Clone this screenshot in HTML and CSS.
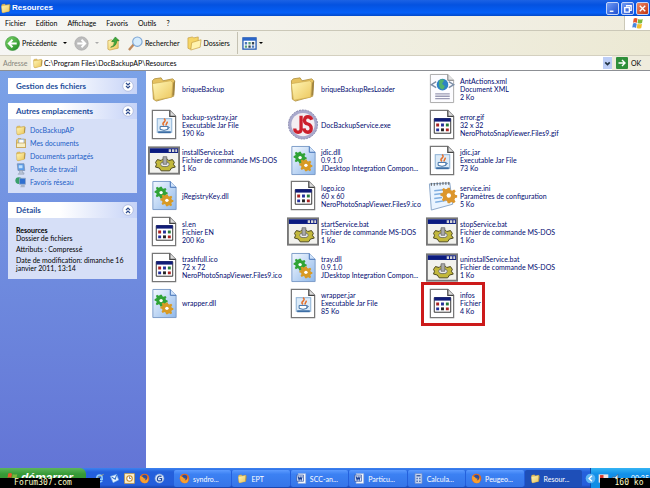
FILE: index.html
```html
<!DOCTYPE html>
<html lang="fr">

<head>
    <meta charset="UTF-8" />
    <meta name="viewport" content="width=device-width, initial-scale=1.0" />
    <title>Resources</title>
    <link rel="stylesheet" href="styles.css">
</head>

<body>
    <!-- icones communes -->
    <svg class="sprite" aria-hidden="true">
        <defs>
            <linearGradient id="gFolder" x1="0" y1="0" x2="1" y2="1">
                <stop offset="0" stop-color="#fff7b8" />
                <stop offset="1" stop-color="#ecc65c" />
            </linearGradient>
            <linearGradient id="gDll" x1="0" y1="0" x2="1" y2="1">
                <stop offset="0" stop-color="#f4f9ff" />
                <stop offset="1" stop-color="#8fb8ea" />
            </linearGradient>
            <linearGradient id="gGreen" x1="0" y1="0" x2="1" y2="1">
                <stop offset="0" stop-color="#7fd66b" />
                <stop offset="1" stop-color="#1f8a22" />
            </linearGradient>
        </defs>
        <symbol id="folder" viewBox="0 0 32 32">
            <path d="M4 8l2-2 7-1 2 3 10-2 2 2-1 16-18 5-3-2z" fill="#e6c260" stroke="#a98a3a" stroke-width=".8" />
            <path d="M4 11l19-3 2 2-1 15-17 3-1-1z" fill="url(#gFolder)" stroke="#c8a44a" stroke-width=".6" />
            <path d="M25.500 10l2-2-1 14-2 2z" fill="#a08440" />
        </symbol>
        <symbol id="page" viewBox="0 0 32 32">
            <path d="M4 1.500h18l6 6v23H4z" fill="#fff" stroke="#777" stroke-width="1.300" />
            <path d="M22 1.500v6h6" fill="#ddd" stroke="#444" stroke-width="1.300" />
        </symbol>
        <symbol id="gear" viewBox="0 0 16 16">
            <path d="M7 1h2l.5 2 1.500.6 2-1 1.400 1.500-1.200 1.700.6 1.400 2 .6v2l-2 .5-.6 1.500 1 1.800-1.600 1.400-1.700-1.100-1.500.6L9 15H7l-.6-2-1.400-.6-1.900 1-1.400-1.500 1.100-1.800-.6-1.500-2-.5V6.200l2-.6.6-1.400-1-1.700L3.300 1.200l1.800 1 1.400-.5z" />
            <circle cx="8" cy="8" r="2" fill="#fff" />
        </symbol>
        <symbol id="jar" viewBox="0 0 32 32">
            <use href="#page" />
            <rect x="9" y="10" width="15" height="14" fill="#dcebf8" stroke="#8ab0d4" />
            <path d="M16 17c-4-3 4-4 0-7M18.500 17c-1.500-2 2-2 .5-4" fill="none" stroke="#e4702c" stroke-width="1.600" />
            <path d="M12 18h8v3q-4 2-8 0zM20 18.500q3 0 0 2" fill="#fff" stroke="#3d6ea5" />
            <path d="M10 24h13" stroke="#3d6ea5" stroke-width="2" />
        </symbol>
        <symbol id="dll" viewBox="0 0 32 32">
            <path d="M4.500 1.500h18l6 6v23h-24z" fill="url(#gDll)" stroke="#7c9cc8" />
            <path d="M22.500 1.500v6h6" fill="#cfe2fa" stroke="#3c6cb4" />
            <use href="#gear" x="6" y="6" width="14" height="14" fill="#2fa336" />
            <use href="#gear" x="12" y="14" width="14" height="14" fill="#d89a24" />
        </symbol>
        <symbol id="bat" viewBox="0 0 34 30">
            <rect x="1" y="1" width="32" height="28" fill="#f2f2ee" stroke="#777" stroke-width="2" />
            <path d="M2 2h30v5H2z" fill="#0b1b80" />
            <path d="M22 3h2.500v3H22zM25.500 3H28v3h-2.500zM29 3h2v3h-2z" fill="#d5d5d5" />
            <path d="M8 17l2-3 4 1 2-2h4l2 2 4-1 2 3-1 2 2 3-4 1-2 3h-9l-2-3-4-1 1-3z" fill="#c2b83c" stroke="#45411a" />
            <ellipse cx="18" cy="19" rx="4.500" ry="2.500" fill="#efefef" stroke="#555" stroke-width=".8" />
            <path d="M16 11h4v8h-4z" fill="#aaa" stroke="#666" stroke-width=".8" />
        </symbol>
        <symbol id="table" viewBox="0 0 32 32">
            <use href="#page" />
            <path d="M8 10h17v15H8z" fill="#fff" stroke="#333" />
            <path d="M8 9.500h17v3.500H8z" fill="#101c78" />
            <path d="M10 15h3v3h-3zM20 20h3v3h-3z" fill="#a22" />
            <path d="M15 15h3v3h-3zM10 20h3v3h-3z" fill="#24309a" />
            <path d="M20 15h3v3h-3z" fill="#267a3a" />
            <path d="M15 20h3v3h-3z" fill="#222" />
        </symbol>
        <symbol id="xml" viewBox="0 0 32 32">
            <path d="M4 1.500h18l6 6v23H4z" fill="#fcfcff" stroke="#aaa" />
            <path d="M22 1.500v6h6" fill="#e4e4e4" stroke="#777" />
            <path d="M10 9l-5 3 5 3M23 9l5 3-5 3" fill="none" stroke="#7d8fa8" stroke-width="1.500" />
            <circle cx="16.500" cy="12" r="6" fill="#2d83c4" />
            <path d="M13 8q4-3 5 0l-2 3 3 3-2 3q-4-1-4-5z" fill="#52b36c" />
            <path d="M9 21.500h15M9 24h15M9 26.500h15" stroke="#9a9ab4" stroke-width="1.300" />
        </symbol>
        <symbol id="ini" viewBox="0 0 32 32">
            <path d="M3 4l21-1 3 22-22 6z" fill="#eaf4ff" stroke="#8aa6c8" />
            <path d="M5 3v3M8 3v3M11 2.500v3M14 2.500v3M17 2v3M20 2v3M23 2v3" stroke="#555" />
            <path d="M8 11l10-1M8 15l8-1M8 19l8-1M9 23l12-2" stroke="#7faee0" stroke-width="1.500" />
            <use href="#gear" x="14" y="7" width="18" height="18" fill="#dc962c" />
        </symbol>
        <symbol id="exe" viewBox="0 0 32 32">
            <circle cx="16" cy="16" r="15" fill="#a9a9cc" stroke="#8585ac" stroke-dasharray="2 1" />
            <circle cx="16" cy="16" r="12" fill="#f4eef2" />
            <path d="M14 7v14q0 3-3 3-3.500 0-3.500-4M25 11q-1-3-4-3t-3.500 3.500q0 3 3.500 4t3.500 4.500-3.500 4q-3.500 0-4-4" fill="none" stroke="#cc1f2c" stroke-width="3.400" />
        </symbol>
        <symbol id="chevron" viewBox="0 0 12 12">
            <circle cx="6" cy="6" r="5.300" fill="#fff" stroke="#a9b6dc" stroke-width=".8" />
            <path d="M4 3l2 2 2-2M4 6l2 2 2-2" fill="none" stroke="#2c4a8c" stroke-width="1.200" />
        </symbol>
        <symbol id="pc" viewBox="0 0 16 16">
            <path d="M3 1h9l1 9H4z" fill="#5b9be8" stroke="#7c8fb0" />
            <path d="M5 3h5v4H5z" fill="#bfe0ff" />
            <path d="M6 10h4v3h2v2H4l2-2z" fill="#b9c3d6" stroke="#8290a8" stroke-width=".6" />
        </symbol>
        <symbol id="docs" viewBox="0 0 16 16">
            <path d="M2 4l2-2h4l1 1h5v11H2z" fill="#f0d070" stroke="#b8923a" stroke-width=".8" />
            <path d="M5 3h7v6H5z" fill="#fff" stroke="#7aa4dc" />
            <path d="M2 8h12v6H2z" fill="#f7eec4" stroke="#b8923a" stroke-width=".8" />
        </symbol>
        <symbol id="network" viewBox="0 0 16 16">
            <circle cx="5" cy="6" r="4.500" fill="#3aa06c" />
            <path d="M6 3h8v8H6z" fill="#2f6fd0" stroke="#93a5c4" />
            <path d="M8 12h5v3H7z" fill="#a8b4c8" />
        </symbol>
        <symbol id="firefox" viewBox="0 0 16 16">
            <circle cx="8" cy="8" r="7" fill="#e5691c" />
            <circle cx="8" cy="6.500" r="4" fill="#2c4f9c" />
            <path d="M1.500 4q2 2 4 1.500l1.500 2 3 1-2 2.500q4 0 5-5 2 9-5 9-7-1-6.500-11z" fill="#f5a031" />
        </symbol>
        <symbol id="word" viewBox="0 0 16 16">
            <path d="M3 1h11v14H3z" fill="#fff" stroke="#9fb4dc" />
            <path d="M1 3h10v9H1z" fill="#dde8fb" stroke="#2a4fa0" />
            <path d="M3 5l1.500 5L6 6l1.500 4L9 5" fill="none" stroke="#173b90" stroke-width="1.500" />
        </symbol>
        <symbol id="flag" viewBox="0 0 16 16">
            <path d="M3 2q3-1.500 5 .3L7 8Q5 6.500 2 7.500z" fill="#e8562a" />
            <path d="M9 2.500q3 1.500 6 0L14 8q-3 1.500-6 0z" fill="#7cb83a" />
            <path d="M2 8.500q3-1 5 .5l-1 5.500q-2-1.700-5-.5z" fill="#4a86dc" />
            <path d="M8 9q3 1.500 6 0l-1 5.500q-3 1.500-6 0z" fill="#f2bd2c" />
        </symbol>
    </svg>

    <!-- barre de titre -->
    <header class="titlebar">
        <svg class="icon12"><use href="#folder" /></svg>
        <h1>Resources</h1>
        <div class="winbtns">
            <button class="winbtn" aria-label="Réduire"><svg viewBox="0 0 12 12"><path d="M3 9h4" /></svg></button>
            <button class="winbtn" aria-label="Restaurer"><svg viewBox="0 0 12 12"><path d="M5 4V3h5v5H8M3 5h5v5H3z" /></svg></button>
            <button class="winbtn close" aria-label="Fermer"><svg viewBox="0 0 12 12"><path d="M3 3l6 6M9 3l-6 6" /></svg></button>
        </div>
    </header>

    <nav class="menubar">
        <button>Fichier</button>
        <button>Edition</button>
        <button>Affichage</button>
        <button>Favoris</button>
        <button>Outils</button>
        <button>?</button>
        <div class="logo"><svg><use href="#flag" /></svg></div>
    </nav>

    <div class="toolbar">
        <button class="tool">
            <svg viewBox="0 0 16 16"><circle cx="8" cy="8" r="7.500" fill="url(#gGreen)" stroke="#2c8a30" stroke-width=".6" /><path d="M12.500 8H4M8 4L4 8l4 4" fill="none" stroke="#fff" stroke-width="2" /></svg>
            <span>Précédente</span><i class="caret"></i>
        </button>
        <button class="tool" aria-label="Suivante">
            <svg viewBox="0 0 16 16"><circle cx="8" cy="8" r="7.200" fill="#bcbcbc" stroke="#a4a4a4" stroke-width=".6" /><path d="M3.500 8H12M8 4l4 4-4 4" fill="none" stroke="#fff" stroke-width="2" /></svg>
            <i class="caret off"></i>
        </button>
        <button class="tool" aria-label="Dossier parent">
            <svg viewBox="0 0 16 16"><path d="M2 5l4-1 1 1 6-1v9l-9 2-2-1z" fill="url(#gFolder)" stroke="#c49b3c" stroke-width=".7" /><path d="M5 12q4-1 4-6H6l4-5 4 4h-2.500q0 6-6.500 7z" fill="#3da83c" stroke="#1f7a22" stroke-width=".6" /></svg>
        </button>
        <button class="tool">
            <svg viewBox="0 0 16 16"><path d="M1 15l5-6" stroke="#c08a5c" stroke-width="2.500" /><circle cx="10" cy="6" r="5" fill="#d6ecfc" stroke="#7ea6d4" stroke-width="1.200" /></svg>
            <span>Rechercher</span>
        </button>
        <button class="tool">
            <svg viewBox="0 0 16 16"><path d="M1 2l5-1 1 1 5-1v9l-9 4-2-1z" fill="#f5d566" stroke="#c49b3c" stroke-width=".7" /><path d="M5 7l10-3-1 8-10 3z" fill="#fff3ae" stroke="#c49b3c" stroke-width=".7" /></svg>
            <span>Dossiers</span>
        </button>
        <button class="tool views" aria-label="Affichages">
            <svg viewBox="0 0 16 14"><rect x="1" y="1" width="14" height="12" fill="#fff" stroke="#245cb4" stroke-width="1.400" /><path d="M1 1h14v3H1z" fill="#2a66c8" /><path d="M3 5.500h2.500V8H3zM10.500 9H13v2.500h-2.500z" fill="#4a78b8" /><path d="M6.800 5.500h2.500V8H6.800zM3 9h2.500v2.500H3z" fill="#58a078" /><path d="M10.500 5.500H13V8h-2.500zM6.800 9h2.500v2.500H6.800z" fill="#345" /></svg>
            <i class="caret"></i>
        </button>
    </div>

    <form class="address">
        <label for="path">Adresse</label>
        <div class="field">
            <svg class="icon12"><use href="#folder" /></svg>
            <input type="text" id="path" value="C:\Program Files\DocBackupAP\Resources">
            <button type="button" class="drop" aria-label="Dérouler"><svg viewBox="0 0 8 8"><path d="M2 3l2 2 2-2" /></svg></button>
        </div>
        <button type="button" class="go">
            <svg viewBox="0 0 12 12"><rect width="12" height="12" rx="1" fill="#2f8f3a" /><path d="M2.500 6H9M6 3l3 3-3 3" fill="none" stroke="#fff" stroke-width="1.400" /></svg>
            OK
        </button>
    </form>

    <main class="main">
        <aside class="sidebar">
            <section class="panel">
                <h2>Gestion des fichiers <button aria-label="Développer"><svg><use href="#chevron" /></svg></button></h2>
            </section>
            <section class="panel">
                <h2>Autres emplacements <button class="up" aria-label="Réduire"><svg><use href="#chevron" /></svg></button></h2>
                <ul class="places">
                    <li><a href="#"><svg class="icon12"><use href="#folder" /></svg>DocBackupAP</a></li>
                    <li><a href="#"><svg class="icon12"><use href="#docs" /></svg>Mes documents</a></li>
                    <li><a href="#"><svg class="icon12"><use href="#folder" /></svg>Documents partagés</a></li>
                    <li><a href="#"><svg class="icon12"><use href="#pc" /></svg>Poste de travail</a></li>
                    <li><a href="#"><svg class="icon12"><use href="#network" /></svg>Favoris réseau</a></li>
                </ul>
            </section>
            <section class="panel">
                <h2>Détails <button class="up" aria-label="Réduire"><svg><use href="#chevron" /></svg></button></h2>
                <div class="details">
                    <p><b>Resources</b><br>Dossier de fichiers</p>
                    <p>Attributs : Compressé</p>
                    <p>Date de modification: dimanche 16 janvier 2011, 13:14</p>
                </div>
            </section>
        </aside>

        <!-- liste des fichiers -->
        <ul class="files">
            <li><svg><use href="#folder" /></svg><p>briqueBackup</p></li>
            <li><svg><use href="#folder" /></svg><p>briqueBackupResLoader</p></li>
            <li><svg><use href="#xml" /></svg><p>AntActions.xml<br>Document XML<br>2 Ko</p></li>

            <li><svg><use href="#jar" /></svg><p>backup-systray.jar<br>Executable Jar File<br>190 Ko</p></li>
            <li><svg><use href="#exe" /></svg><p>DocBackupService.exe</p></li>
            <li><svg><use href="#table" /></svg><p>error.gif<br>32 x 32<br>NeroPhotoSnapViewer.Files9.gif</p></li>

            <li><svg><use href="#bat" /></svg><p>installService.bat<br>Fichier de commande MS-DOS<br>1 Ko</p></li>
            <li><svg><use href="#dll" /></svg><p>jdic.dll<br>0.9.1.0<br>JDesktop Integration Compon...</p></li>
            <li><svg><use href="#jar" /></svg><p>jdic.jar<br>Executable Jar File<br>73 Ko</p></li>

            <li><svg><use href="#dll" /></svg><p>jRegistryKey.dll</p></li>
            <li><svg><use href="#table" /></svg><p>logo.ico<br>60 x 60<br>NeroPhotoSnapViewer.Files9.ico</p></li>
            <li><svg><use href="#ini" /></svg><p>service.ini<br>Paramètres de configuration<br>5 Ko</p></li>

            <li><svg><use href="#table" /></svg><p>sl.en<br>Fichier EN<br>200 Ko</p></li>
            <li><svg><use href="#bat" /></svg><p>startService.bat<br>Fichier de commande MS-DOS<br>1 Ko</p></li>
            <li><svg><use href="#bat" /></svg><p>stopService.bat<br>Fichier de commande MS-DOS<br>1 Ko</p></li>

            <li><svg><use href="#table" /></svg><p>trashfull.ico<br>72 x 72<br>NeroPhotoSnapViewer.Files9.ico</p></li>
            <li><svg><use href="#dll" /></svg><p>tray.dll<br>0.9.1.0<br>JDesktop Integration Compon...</p></li>
            <li><svg><use href="#bat" /></svg><p>uninstallService.bat<br>Fichier de commande MS-DOS<br>1 Ko</p></li>

            <li><svg><use href="#dll" /></svg><p>wrapper.dll</p></li>
            <li><svg><use href="#jar" /></svg><p>wrapper.jar<br>Executable Jar File<br>85 Ko</p></li>
            <li class="marked"><svg><use href="#table" /></svg><p>infos<br>Fichier<br>4 Ko</p></li>
        </ul>
    </main>

    <footer class="taskbar">
        <button class="start"><svg><use href="#flag" /></svg>démarrer</button>
        <div class="quick">
            <svg viewBox="0 0 16 16"><path d="M13 9H4q1 4 4 4t4-2M4 8q0-5 4-5t4 5" fill="none" stroke="#8ccbff" stroke-width="2.200" /><path d="M1 13Q0 8 14 2" fill="none" stroke="#d8c060" /></svg>
            <svg viewBox="0 0 16 16"><path d="M2 5l9-3 3 8-8 4z" fill="#e8f3ff" stroke="#7ab2e8" /><path d="M4 6l5 3 2-6" fill="none" stroke="#2a6cc8" stroke-width="1.500" /></svg>
            <svg viewBox="0 0 16 16"><rect x="1" y="1" width="14" height="14" fill="#fbeecb" stroke="#d9a336" /><circle cx="8" cy="8" r="4" fill="#fff" stroke="#c98a20" stroke-width="1.500" /><path d="M8 5v3h2" fill="none" stroke="#555" /></svg>
            <svg><use href="#firefox" /></svg>
            <svg viewBox="0 0 16 16"><circle cx="8" cy="8" r="6.500" fill="#dce8fa" stroke="#7ea0d8" /><path d="M11 5q-5-2-6 3t6 3V8H8" fill="none" stroke="#234a9c" stroke-width="1.800" /></svg>
        </div>
        <div class="tasks">
            <button><svg><use href="#firefox" /></svg>syndro...</button>
            <button><svg><use href="#folder" /></svg>EPT</button>
            <button><svg><use href="#word" /></svg>SCC-an...</button>
            <button><svg><use href="#word" /></svg>Particu...</button>
            <button><svg viewBox="0 0 16 16"><path d="M3 1h10v14H3z" fill="#cfdcf4" stroke="#7a92c4" /><path d="M5 3h6v2H5zM5 7h2v2H5zM9 7h2v2H9zM5 11h2v2H5zM9 11h2v2H9z" fill="#3f62a8" /></svg>Calcula...</button>
            <button><svg><use href="#firefox" /></svg>Peugeo...</button>
            <button class="active"><svg><use href="#folder" /></svg>Resour...</button>
        </div>
        <div class="tray">
            <svg viewBox="0 0 16 16"><circle cx="8" cy="8" r="7" fill="#5cb4f4" /><path d="M10 4L6 8l4 4" fill="none" stroke="#fff" stroke-width="2" /></svg>
            <svg viewBox="0 0 16 16"><path d="M1 2h14v12H1z" fill="#f4e4e0" /><path d="M3 3h5v5H3z" fill="#d8382c" /><path d="M9 8h5v5H9z" fill="#3d9c50" /></svg>
            <svg viewBox="0 0 16 16"><path d="M2 6h4l4-4v12l-4-4H2z" fill="#e8eef8" stroke="#567" /></svg>
            <span>00:25</span>
        </div>
    </footer>
    <span class="tag tag-left">Forum307.com</span>
    <span class="tag tag-right">160 ko</span>
</body>

</html>
```
FILE: styles.css
```css
* {
    margin: 0;
    padding: 0;
    box-sizing: border-box;
}

body {
    display: flex;
    flex-direction: column;
    min-height: 100vh;
    position: relative;
    background: #fff;
    color: #000;
    font: 7px/8px Lato, "Liberation Sans", Arial, sans-serif;
}

ul {
    list-style: none;
}

button {
    border: none;
    background: none;
    font: inherit;
    color: inherit;
    white-space: nowrap;
}

svg {
    display: block;
    flex: none;
}

.sprite {
    position: absolute;
    width: 0;
    height: 0;
}

.icon12 {
    width: 12px;
    height: 12px;
}

/* barre de titre */
.titlebar {
    display: flex;
    align-items: center;
    height: 16px;
    padding-right: 1px;
    background: linear-gradient(#1c62e4, #0452e0 30%, #0560f8 80%, #0349c8);
    color: #fff;
}

.titlebar h1 {
    font: bold 8px/10px "Liberation Sans", Arial, sans-serif;
}

.winbtns {
    display: flex;
    gap: 2px;
    margin-left: auto;
}

.winbtn {
    width: 13px;
    height: 13px;
    border: 1px solid #c4d4f8;
    border-radius: 2px;
    background: linear-gradient(135deg, #6f9bf5, #1f4fd0);
}

.winbtn path {
    fill: none;
    stroke: #fff;
    stroke-width: 1.5;
}

.close {
    background: linear-gradient(135deg, #ec8a68, #c23412);
}

/* menus */
.menubar {
    display: flex;
    align-items: center;
    gap: 10px;
    height: 15px;
    padding-left: 5px;
    border-bottom: 1px solid #cbc8b8;
    background: linear-gradient(90deg, #f6f6f4, #efecdd);
}

.logo {
    align-self: stretch;
    width: 26px;
    margin-left: auto;
    padding: 1px 6px;
    border-left: 1px solid #cbc8b8;
    background: #fff;
}

.logo svg {
    width: 13px;
    height: 12px;
}

.toolbar {
    display: flex;
    align-items: center;
    gap: 7px;
    height: 25px;
    padding-left: 5px;
    border-bottom: 1px solid #d4d0c0;
    background: linear-gradient(100deg, #f6f6f4, #ece9d4);
}

.tool {
    display: flex;
    align-items: center;
    gap: 2px;
}

.tool svg {
    width: 15px;
    height: 15px;
}

.views {
    height: 22px;
    padding-left: 4px;
    border-left: 1px solid #c4c1b2;
}

.caret {
    margin-left: 4px;
    border: 2px solid transparent;
    border-top-color: #000;
    border-bottom: none;
}

.views .caret {
    margin-left: 0;
}

.off {
    border-top-color: #aaa;
}

/* barre d'adresse */
.address {
    display: flex;
    align-items: center;
    height: 15px;
    padding-left: 3px;
    border-bottom: 1px solid #8c8f94;
    background: #efecdd;
}

.address label {
    width: 28px;
    color: #85857c;
}

.field {
    display: flex;
    align-items: center;
    flex: 1;
    height: 14px;
    padding-left: 1px;
    background: #fff;
}

.field input {
    flex: 1;
    min-width: 0;
    border: none;
    outline: none;
    font: inherit;
}

.drop {
    width: 9px;
    height: 12px;
    background: #bccdf6;
}

.drop path {
    fill: none;
    stroke: #234;
    stroke-width: 1.5;
}

.go {
    display: flex;
    align-items: center;
    gap: 3px;
    width: 38px;
    padding-left: 4px;
}

.go svg {
    width: 12px;
    height: 12px;
}

/* zone centrale */
.main {
    display: flex;
    flex: 1;
}

.sidebar {
    display: flex;
    flex-direction: column;
    gap: 9px;
    width: 146px;
    padding: 7px 9px 7px 8px;
    background: linear-gradient(#7ba2e7, #6375d6);
}

.panel {
    background: #d6dff7;
}

.panel h2 {
    display: flex;
    align-items: center;
    justify-content: space-between;
    height: 16px;
    padding: 0 3px 0 8px;
    background: linear-gradient(90deg, #fff 40%, #c6d3f7);
    color: #1f4f9c;
    font-size: 8px;
}

.panel h2 svg {
    width: 12px;
    height: 12px;
}

.up {
    transform: rotate(180deg);
}

.places {
    padding: 4px 7px 5px;
}

.places a {
    display: flex;
    align-items: center;
    gap: 3px;
    height: 13px;
    color: #215dc6;
    text-decoration: none;
}

.details {
    display: flex;
    flex-direction: column;
    gap: 3px;
    padding: 8px 8px 7px;
}

.files {
    display: grid;
    flex: 1;
    grid-template-columns: repeat(auto-fill, 139px);
    grid-template-rows: repeat(7, 1fr);
    height: 250px;
    padding-left: 2px;
    color: #000a70;
}

.files li {
    display: flex;
    align-items: center;
    gap: 2px;
    position: relative;
    white-space: nowrap;
}

.files svg {
    width: 32px;
    height: 31px;
}

/* cadre rouge autour du fichier */
.marked::after {
    content: "";
    position: absolute;
    top: -3px;
    left: -5px;
    width: 58px;
    height: 38px;
    border: 3px solid #cc1a1a;
}

/* barre des taches */
.taskbar {
    display: flex;
    height: 20px;
    background: linear-gradient(#3d83f0, #2460dc 20%, #245edb 85%, #1941a5);
    color: #fff;
}

.start {
    display: flex;
    align-items: center;
    gap: 3px;
    width: 86px;
    padding-left: 6px;
    border-radius: 0 6px 6px 0;
    background: linear-gradient(#5cb65c, #379a37 30%, #2f8a2f);
    font: italic bold 12px/14px "Liberation Sans", Arial, sans-serif;
}

.start svg {
    width: 12px;
    height: 12px;
}

.quick {
    display: flex;
    align-items: center;
    gap: 4px;
    width: 88px;
    padding-left: 8px;
}

.quick svg,
.tasks svg,
.tray svg {
    width: 11px;
    height: 11px;
}

.tasks {
    display: flex;
    flex: 1;
    gap: 1px;
    padding: 2px 0 1px;
}

.tasks button {
    display: flex;
    align-items: center;
    flex: 1;
    gap: 3px;
    padding-left: 5px;
    border-radius: 2px;
    background: linear-gradient(#5c9bff, #3c81f3 25%, #3575e8);
}

.tasks .active {
    flex-grow: 1;
    background: #1e4fb8;
}

.tray {
    display: flex;
    align-items: center;
    gap: 2px;
    width: 60px;
    margin-left: 8px;
    border-left: 1px solid #0d4ca8;
    background: linear-gradient(#35b4f4, #1290e8 30%, #118de4);
}

.tray svg:first-child {
    margin-left: -6px;
}

.tray span {
    margin-left: 7px;
}

.tag {
    position: absolute;
    bottom: 0;
    height: 10px;
    background: #000;
    color: #ffffc8;
    font: 8px/9px "DejaVu Sans Mono", "Liberation Mono", monospace;
    text-align: center;
}

.tag-left {
    left: 0;
    width: 100px;
    padding-right: 14px;
}

.tag-right {
    right: 0;
    width: 50px;
    padding-left: 8px;
}
```
